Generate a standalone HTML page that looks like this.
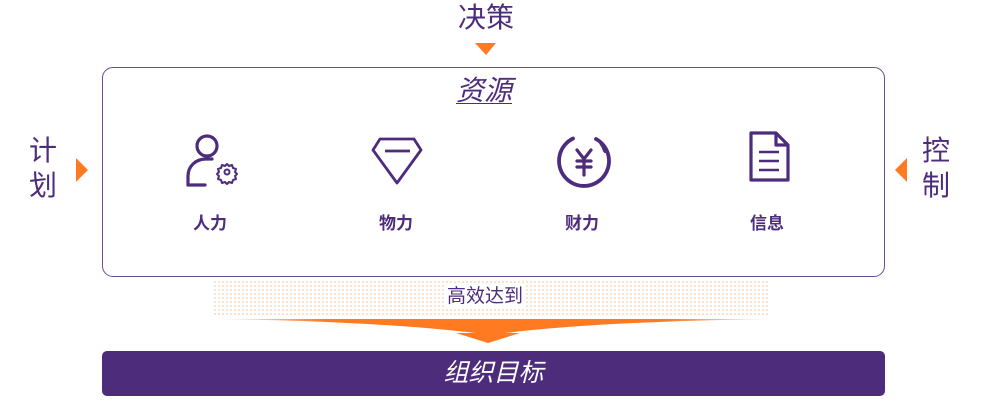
<!DOCTYPE html>
<html><head><meta charset="utf-8"><style>
*{margin:0;padding:0;box-sizing:border-box}
body{width:989px;height:409px;background:#fff;position:relative;overflow:hidden;font-family:"Liberation Sans","Noto Sans CJK SC",sans-serif;color:#4e2c7c}
.a{position:absolute}
.big{font-size:28px;line-height:34px}
.lbl{font-size:17px;font-weight:bold;width:80px;text-align:center;top:209px}
</style></head><body>
<div class="a big" style="left:458px;top:1px;width:60px">决策</div>
<svg class="a" style="left:474px;top:42px" width="24" height="14"><path d="M1 1H22L12 13Z" fill="#ff7a21"/></svg>
<div class="a big" style="left:29px;top:133px;width:32px;line-height:35px">计<br>划</div>
<svg class="a" style="left:74px;top:157px" width="16" height="26"><path d="M2 1L14 13L2 25Z" fill="#ff7a21"/></svg>
<div class="a big" style="left:922px;top:133px;width:32px;line-height:35px">控<br>制</div>
<svg class="a" style="left:893px;top:157px" width="16" height="26"><path d="M14 1L2 13L14 25Z" fill="#ff7a21"/></svg>
<div class="a" style="left:102px;top:67px;width:783px;height:210px;border:1.3px solid #6a4d95;border-radius:11px"></div>
<div class="a" style="left:456px;top:69px;font-size:28px;font-style:italic;text-decoration:underline;text-decoration-thickness:1px;text-underline-offset:3px">资源</div>
<svg class="a" style="left:180px;top:128px" width="70" height="64" fill="none" stroke="#4e2c7c" stroke-width="3.2" stroke-linecap="round">
<circle cx="27" cy="18" r="10"/>
<path d="M8 57V48C8 38 16 31 26 31H32"/>
<path d="M8 57H25"/>
<circle cx="47" cy="44" r="2.5" stroke-width="2"/>
<path d="M47 36l2 2 3-1 1 3 3 1-1 3 2 2-2 2 1 3-3 1-1 3-3-1-2 2-2-2-3 1-1-3-3-1 1-3-2-2 2-2-1-3 3-1 1-3 3 1z" stroke-width="2" stroke-linejoin="round"/>
</svg>
<svg class="a" style="left:370px;top:135px" width="54" height="52" fill="none" stroke="#4e2c7c" stroke-width="2.8" stroke-linejoin="round">
<path d="M10 4H44L51 15L27 48L3 15Z"/><path d="M15 16H40"/>
</svg>
<svg class="a" style="left:555px;top:133px" width="58" height="58" fill="none" stroke="#4e2c7c" stroke-width="3.8" stroke-linecap="round">
<path d="M41 6A25 25 0 1 1 18 5.5"/><path d="M50 18A25 25 0 0 0 46 10"/>
<path d="M22 17L29 26L36 17M22 28H36M22 34H36M29 26V42" stroke-width="3.2"/>
</svg>
<svg class="a" style="left:745px;top:131px" width="46" height="54" fill="none" stroke="#4e2c7c" stroke-width="3.2" stroke-linejoin="round">
<path d="M6 2H31L43 14V49H6Z" /><path d="M31 2V14H43"/>
<path d="M14 21H34M14 30H34M14 39H34" stroke-width="2.4"/>
</svg>
<div class="a lbl" style="left:170px">人力</div>
<div class="a lbl" style="left:356px">物力</div>
<div class="a lbl" style="left:542px">财力</div>
<div class="a lbl" style="left:727px">信息</div>
<div class="a" style="left:213px;top:280px;width:557px;height:36px;background-image:radial-gradient(circle,#f6c9a6 0.7px,transparent 0.9px);background-size:4px 4px"></div>
<div class="a" style="left:445px;top:285px;font-size:19px;line-height:23px;background:#fff;padding:0 2px">高效达到</div>
<svg class="a" style="left:205px;top:316px" width="580" height="30"><defs><linearGradient id="g" x1="0" x2="1"><stop offset="0" stop-color="#ff7a21" stop-opacity="0"/><stop offset=".2" stop-color="#ff7a21"/><stop offset=".8" stop-color="#ff7a21"/><stop offset="1" stop-color="#ff7a21" stop-opacity="0"/></linearGradient></defs>
<path d="M5 3H575Q400 5 300 17H315L283 27L251 17H270Q170 5 5 3Z" fill="url(#g)"/></svg>
<div class="a" style="left:102px;top:351px;width:783px;height:45px;background:#4e2c7c;border-radius:5px;color:#fff;font-size:25px;font-style:italic;text-align:center;line-height:45px">组织目标</div>
</body></html>
